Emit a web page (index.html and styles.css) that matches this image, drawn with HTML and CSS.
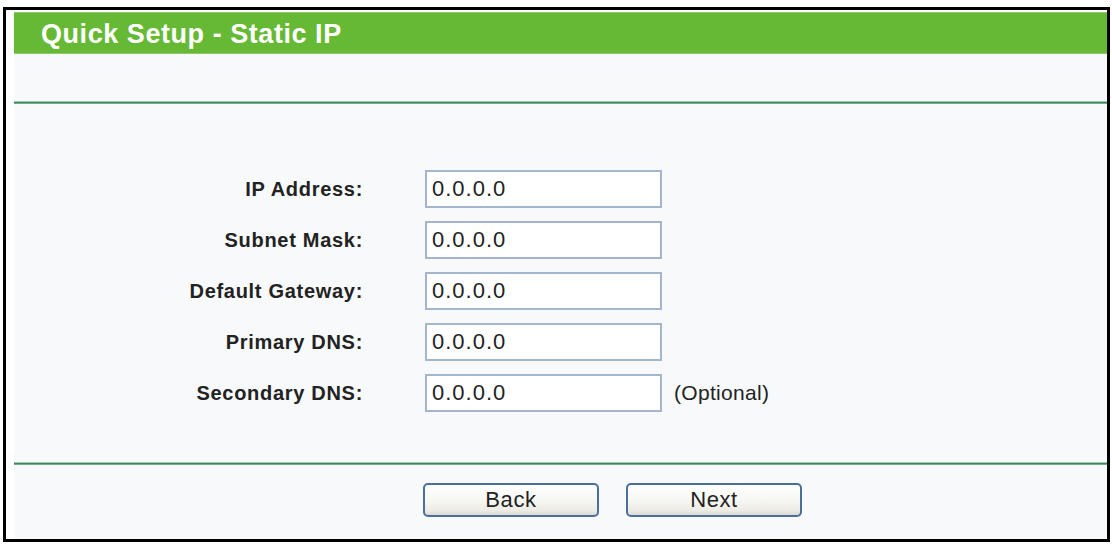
FILE: index.html
```html
<!DOCTYPE html>
<html>
<head>
<meta charset="utf-8">
<link rel="stylesheet" href="styles.css">
</head>
<body>
<div class="frame">
  <div class="panel">
    <div class="title">Quick Setup - Static IP</div>
    <div class="spacer"></div>
    <div class="rule"></div>
    <div class="form">
      <div class="row">
        <label class="lbl">IP Address:</label>
        <input class="field" type="text" value="0.0.0.0">
      </div>
      <div class="row">
        <label class="lbl">Subnet Mask:</label>
        <input class="field" type="text" value="0.0.0.0">
      </div>
      <div class="row">
        <label class="lbl">Default Gateway:</label>
        <input class="field" type="text" value="0.0.0.0">
      </div>
      <div class="row">
        <label class="lbl">Primary DNS:</label>
        <input class="field" type="text" value="0.0.0.0">
      </div>
      <div class="row">
        <label class="lbl">Secondary DNS:</label>
        <input class="field" type="text" value="0.0.0.0">
        <span class="note">(Optional)</span>
      </div>
    </div>
    <div class="rule"></div>
    <div class="actions">
      <button class="btn" type="button">Back</button>
      <button class="btn" type="button">Next</button>
    </div>
  </div>
</div>
</body>
</html>
```

FILE: styles.css
```css
html, body {
  margin: 0;
  padding: 0;
  background: #ffffff;
}
body {
  font-family: "Liberation Sans", Arial, sans-serif;
  color: #222222;
}
.frame {
  margin: 7px 0 0 3px;
  width: 1101px;
  height: 529px;
  border: 3px solid #000000;
  background: #ffffff;
  padding: 2px 0 0 8px;
  box-sizing: content-box;
  display: flex;
}
.frame {
  width: 1093px;
  height: 527px;
}
.panel {
  flex: 1;
  background: #f8f9fa;
  display: flex;
  flex-direction: column;
}
.title {
  height: 42px;
  line-height: 42px;
  background: #66b934;
  border-top: 1px solid #8fcb6c;
  border-bottom: 1px solid #8fcb6c;
  box-sizing: border-box;
  color: #ffffff;
  font-weight: bold;
  font-size: 27px;
  letter-spacing: 0.55px;
  padding-left: 27px;
}
.spacer {
  height: 47px;
}
.rule {
  height: 3px;
  background: linear-gradient(#9ccab2 0, #9ccab2 0.5px, #3f8660 1px, #3f8660 2px, #a8d2bb 3px);
}
.form {
  display: flex;
  flex-direction: column;
  gap: 13px;
  padding: 66px 0 50px 0;
}
.row {
  display: grid;
  grid-template-columns: 349px 237px auto;
  column-gap: 62px;
  align-items: center;
}
.row .note {
  margin-left: -50px;
}
.lbl {
  text-align: right;
  font-weight: bold;
  font-size: 20px;
  letter-spacing: 0.7px;
  color: #222222;
}
.field {
  width: 237px;
  height: 38px;
  box-sizing: border-box;
  margin: 0;
  border: 2px solid #a3b6ce;
  background: #ffffff;
  font-family: "Liberation Sans", Arial, sans-serif;
  font-size: 22px;
  letter-spacing: 1px;
  color: #222222;
  padding: 0 0 0 5px;
  outline: none;
}
.note {
  font-size: 21px;
  letter-spacing: 0.3px;
  color: #222222;
}
.actions {
  display: flex;
  gap: 27px;
  padding: 18px 0 0 409px;
}
.btn {
  width: 176px;
  height: 34px;
  margin: 0;
  box-sizing: border-box;
  border: 2px solid #4b6f9c;
  border-radius: 5px;
  background: linear-gradient(#ffffff 0%, #f7f7f4 50%, #ecebe5 85%, #dcdad2 100%);
  font-family: "Liberation Sans", Arial, sans-serif;
  font-size: 22px;
  letter-spacing: 0.6px;
  color: #222222;
  padding: 0;
  line-height: 30px;
}
```
